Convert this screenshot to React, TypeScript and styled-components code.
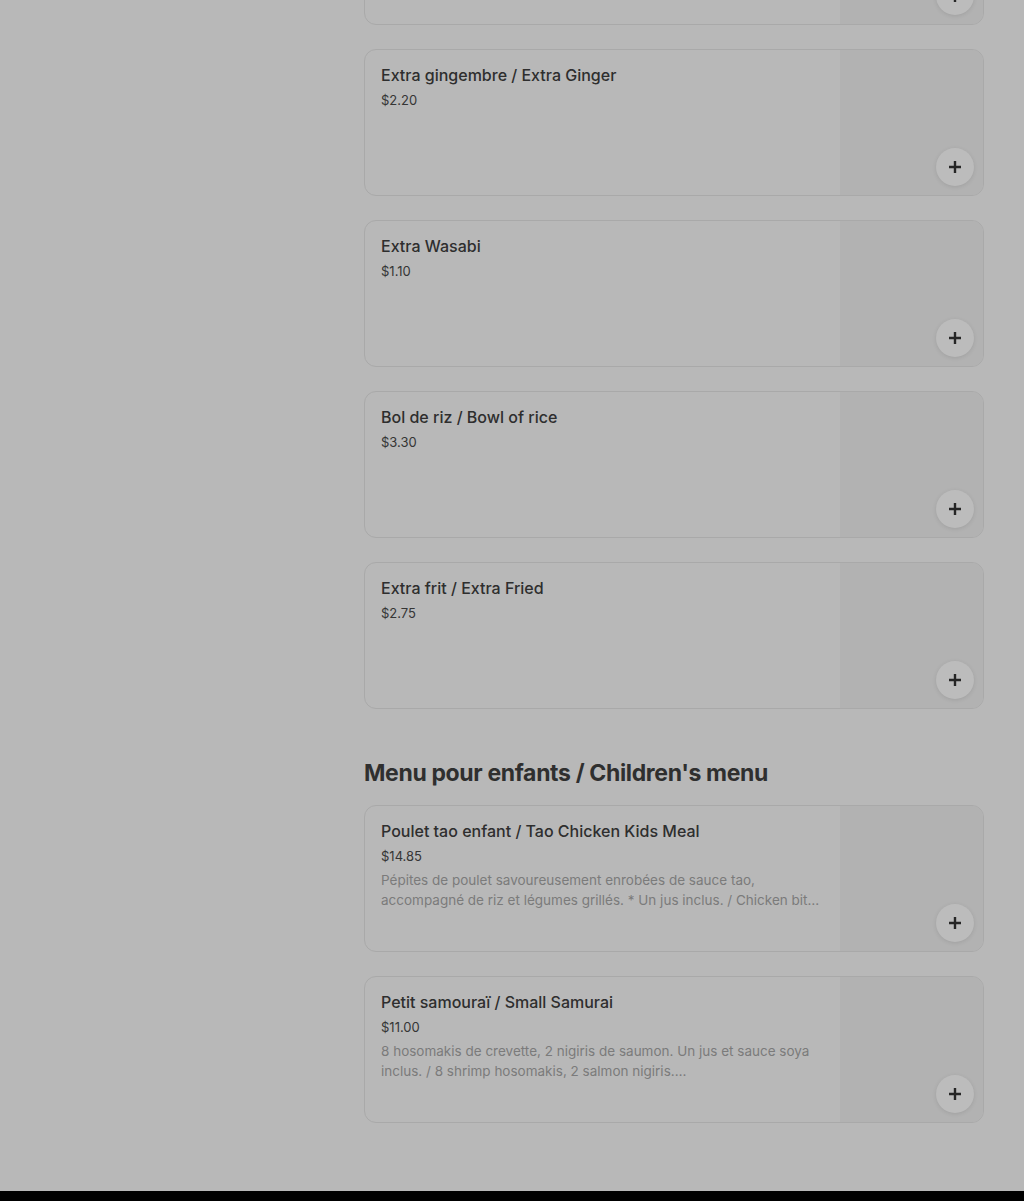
import styled, { createGlobalStyle } from "styled-components";

type Item = {
  name: string;
  price: string;
  description?: string;
};

const extras: Item[] = [
  { name: "Extra sauce / Extra Sauce", price: "$1.10" },
  { name: "Extra gingembre / Extra Ginger", price: "$2.20" },
  { name: "Extra Wasabi", price: "$1.10" },
  { name: "Bol de riz / Bowl of rice", price: "$3.30" },
  { name: "Extra frit / Extra Fried", price: "$2.75" },
];

const kids: Item[] = [
  {
    name: "Poulet tao enfant / Tao Chicken Kids Meal",
    price: "$14.85",
    description:
      "Pépites de poulet savoureusement enrobées de sauce tao, accompagné de riz et légumes grillés. * Un jus inclus. / Chicken bit…",
  },
  {
    name: "Petit samouraï / Small Samurai",
    price: "$11.00",
    description:
      "8 hosomakis de crevette, 2 nigiris de saumon. Un jus et sauce soya inclus. / 8 shrimp hosomakis, 2 salmon nigiris.…",
  },
];

// ─── Styled components ───────────────────────────────────────────────────────

const GlobalStyle = createGlobalStyle`
  html, body {
    margin: 0;
    padding: 0;
    background: #b8b8b8;
  }
  * {
    box-sizing: border-box;
  }
`;

const Page = styled.div`
  font-family: Inter, "Liberation Sans", sans-serif;
  background: #b8b8b8;
  min-height: 1201px;
  display: flex;
  flex-direction: column;
  overflow: hidden;
`;

const Layout = styled.div`
  display: grid;
  grid-template-columns: 364px 620px;
  flex: 1;
`;

const Main = styled.main`
  grid-column: 2;
  margin-top: -122px;
  padding-bottom: 68px;
`;

const List = styled.div`
  display: flex;
  flex-direction: column;
  gap: 24px;
`;

const SectionTitle = styled.h2`
  margin: 48px 0 16px;
  font-size: 23px;
  line-height: 32px;
  font-weight: 700;
  letter-spacing: -0.35px;
  color: #2f2f2f;
`;

const Card = styled.div`
  position: relative;
  display: flex;
  height: 147px;
  border: 1px solid #a9a9a9;
  border-radius: 12px;
  overflow: hidden;
`;

const Info = styled.div`
  flex: 1;
  padding: 13px 16px 0;
  min-width: 0;
`;

const Name = styled.div`
  font-size: 16px;
  line-height: 24px;
  font-weight: 500;
  color: #2e2e2e;
`;

const Price = styled.div`
  margin-top: 3px;
  font-size: 13px;
  line-height: 20px;
  color: #353535;
`;

const Desc = styled.div`
  margin-top: 4px;
  font-size: 13.5px;
  line-height: 20px;
  color: #7b7b7b;
  max-width: 446px;
  display: -webkit-box;
  -webkit-line-clamp: 2;
  -webkit-box-orient: vertical;
  overflow: hidden;
`;

const Thumb = styled.div`
  width: 143px;
  flex-shrink: 0;
  background: #b2b2b2;
`;

const AddButton = styled.button`
  position: absolute;
  right: 9px;
  bottom: 9px;
  width: 38px;
  height: 38px;
  border-radius: 50%;
  border: none;
  padding: 0;
  background: #bcbcbc;
  box-shadow: 0 1px 4px rgba(0, 0, 0, 0.1);
  display: flex;
  align-items: center;
  justify-content: center;
  color: #262626;
`;

const Footer = styled.footer`
  height: 10px;
  background: #000;
`;

// ─── Component ───────────────────────────────────────────────────────────────

function PlusIcon() {
  return (
    <svg width="14" height="14" viewBox="0 0 14 14" aria-hidden="true">
      <path d="M7 1v12M1 7h12" stroke="currentColor" strokeWidth="2.4" />
    </svg>
  );
}

function MenuCard({ item }: { item: Item }) {
  return (
    <Card>
      <Info>
        <Name>{item.name}</Name>
        <Price>{item.price}</Price>
        {item.description && <Desc>{item.description}</Desc>}
      </Info>
      <Thumb />
      <AddButton aria-label={`Ajouter ${item.name}`}>
        <PlusIcon />
      </AddButton>
    </Card>
  );
}

export default function App() {
  return (
    <>
      <GlobalStyle />
      <Page>
        <Layout>
          <Main>
            <List>
              {extras.map((item) => (
                <MenuCard key={item.name} item={item} />
              ))}
            </List>
            <SectionTitle>Menu pour enfants / Children's menu</SectionTitle>
            <List>
              {kids.map((item) => (
                <MenuCard key={item.name} item={item} />
              ))}
            </List>
          </Main>
        </Layout>
        <Footer />
      </Page>
    </>
  );
}
